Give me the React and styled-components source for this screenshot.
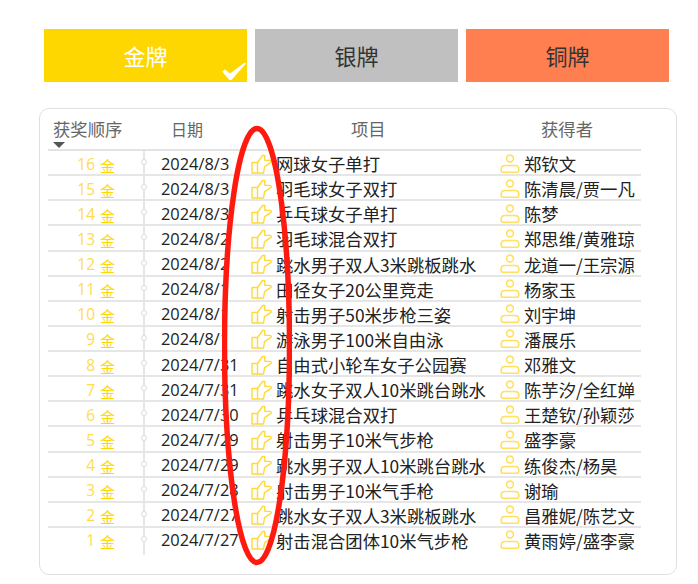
import React, { useState } from 'react'
import styled, { createGlobalStyle } from 'styled-components'

const GlobalStyle = createGlobalStyle`
  html, body { margin: 0; padding: 0; background: #fff; }
  body { font-family: "Open Sans", "Noto Sans CJK SC", sans-serif; }
`

const Page = styled.div`
  position: relative;
  width: 698px;
  height: 584px;
  box-sizing: border-box;
  padding: 29px 0 0 39px;
  overflow: hidden;
`
const Tabs = styled.div`
  display: flex;
  gap: 8px;
  margin-left: 5px;
`
const Tab = styled.button`
  position: relative;
  width: 203px;
  height: 53px;
  padding: 0;
  border: none;
  background: ${p => p.$bg};
  color: ${p => (p.$active ? '#fff' : '#333')};
  font-family: "Noto Sans CJK SC", sans-serif;
  font-size: 22px;
  line-height: 51px;
`
const Check = styled.svg`
  position: absolute;
  right: 1px;
  bottom: 2px;
`
const Card = styled.div`
  box-sizing: border-box;
  width: 638px;
  height: 467px;
  margin-top: 26px;
  padding: 0 0 0 8px;
  border: 1px solid #e0e0e0;
  border-radius: 10px;
`
const HeadRow = styled.div`
  position: relative;
  display: grid;
  grid-template-columns: 118px 180px 190px 1fr;
  width: 593px;
  height: 42px;
  box-sizing: border-box;
  padding-left: 5px;
  border-bottom: 2px solid #e3e3e3;
  color: #666;
  font-family: "Noto Sans CJK SC", sans-serif;
  font-size: 17.33px;
  line-height: 40px;
`
const DateHead = styled.div`
  font-size: 16px;
`
const SortArrow = styled.i`
  position: absolute;
  left: 5px;
  bottom: 1px;
  width: 0;
  height: 0;
  border-left: 6px solid transparent;
  border-right: 6px solid transparent;
  border-top: 6px solid #555;
`
const Row = styled.div`
  display: grid;
  grid-template-columns: 95px 18px 89px 26px 224px 24px 117px;
  align-items: center;
  width: 593px;
  height: 25.13px;
  box-sizing: border-box;
  border-bottom: ${p => (p.$last ? 'none' : '2px solid #e6e6e6')};
  color: #222;
  font-family: "Noto Sans CJK SC", sans-serif;
  font-size: 17.33px;
  white-space: nowrap;
`
const Rank = styled.div`
  display: flex;
  justify-content: flex-end;
  align-items: baseline;
  gap: 5px;
  padding-right: 28px;
  color: #ffdb4d;
  font-family: "Open Sans", sans-serif;
  font-size: 15.5px;
  line-height: 22px;
`
const Medal = styled.span`
  width: 0;
  margin-right: 15px;
  color: #ffd700;
  font-family: "Noto Sans CJK SC", sans-serif;
  font-size: 15px;
  position: relative;
  top: 2px;
`
const Timeline = styled.div`
  position: relative;
  align-self: stretch;
  margin-bottom: -2px;
  &::before {
    content: '';
    position: absolute;
    left: 0;
    top: 0;
    bottom: 0;
    width: 2px;
    background: #e6e6e6;
  }
  &::after {
    content: '';
    position: absolute;
    left: -2.500px;
    top: 8px;
    width: 4px;
    height: 4px;
    background: #fff;
    border: 1.500px solid #dcdcdc;
    border-radius: 50%;
  }
`
const DateText = styled.div`
  font-family: "Open Sans", sans-serif;
  font-size: 16.4px;
  line-height: 22px;
  color: #222;
`
const IconCell = styled.div`
  display: flex;
  align-items: center;
`
const Hoop = styled.svg`
  position: absolute;
  left: 222px;
  top: 125px;
  pointer-events: none;
`

const rows = [
  [16, '2024/8/3', '网球女子单打', '郑钦文'],
  [15, '2024/8/3', '羽毛球女子双打', '陈清晨/贾一凡'],
  [14, '2024/8/3', '乒乓球女子单打', '陈梦'],
  [13, '2024/8/2', '羽毛球混合双打', '郑思维/黄雅琼'],
  [12, '2024/8/2', '跳水男子双人3米跳板跳水', '龙道一/王宗源'],
  [11, '2024/8/1', '田径女子20公里竞走', '杨家玉'],
  [10, '2024/8/1', '射击男子50米步枪三姿', '刘宇坤'],
  [9, '2024/8/1', '游泳男子100米自由泳', '潘展乐'],
  [8, '2024/7/31', '自由式小轮车女子公园赛', '邓雅文'],
  [7, '2024/7/31', '跳水女子双人10米跳台跳水', '陈芋汐/全红婵'],
  [6, '2024/7/30', '乒乓球混合双打', '王楚钦/孙颖莎'],
  [5, '2024/7/29', '射击男子10米气步枪', '盛李豪'],
  [4, '2024/7/29', '跳水男子双人10米跳台跳水', '练俊杰/杨昊'],
  [3, '2024/7/28', '射击男子10米气手枪', '谢瑜'],
  [2, '2024/7/27', '跳水女子双人3米跳板跳水', '昌雅妮/陈艺文'],
  [1, '2024/7/27', '射击混合团体10米气步枪', '黄雨婷/盛李豪'],
]

const tabs = [
  { name: '金牌', bg: '#ffd700' },
  { name: '银牌', bg: '#c0c0c0' },
  { name: '铜牌', bg: '#ff7f50' },
]

const HandIcon = () => (
  <svg width="22" height="20" viewBox="0 0 22 20" fill="none" stroke="#ffd93b" strokeWidth="1.400" strokeLinejoin="round">
    <path d="M2 8.500h5.500v10.500H2z" />
    <path d="M7.500 8.500 12.500 1.500h2.300v4.700l5.200.2c1.300.1 1.700 1.600.6 2.200l-6 4-1.100 6.400H7.500" />
  </svg>
)

const PersonIcon = () => (
  <svg width="20" height="20" viewBox="0 0 20 20" fill="none" stroke="#ffe061" strokeWidth="1.600">
    <circle cx="10" cy="4.500" r="3.400" />
    <path d="M5 11.500h10c2.400 0 3.800 1.500 3.800 3.600v1.100c0 1.300-.7 2-2 2H3.200c-1.300 0-2-.7-2-2v-1.100c0-2.100 1.400-3.600 3.800-3.600z" />
  </svg>
)

export default function App() {
  const [active, setActive] = useState('金牌')
  return (
    <Page>
      <GlobalStyle />
      <Tabs>
        {tabs.map(t => (
          <Tab key={t.name} $bg={t.bg} $active={active === t.name} onClick={() => setActive(t.name)}>
            {t.name}
            {active === t.name && (
              <Check width="24" height="18" viewBox="0 0 24 18" fill="#fff">
                <path d="M0 9.500 3 7.500 8 11.500 23 .5 24 1.500 9.500 18H7.500z" />
              </Check>
            )}
          </Tab>
        ))}
      </Tabs>
      <Card>
        <HeadRow>
          <div>获奖顺序</div>
          <DateHead>日期</DateHead>
          <div>项目</div>
          <div>获得者</div>
          <SortArrow />
        </HeadRow>
        {rows.map((r, i) => (
          <Row key={r[0]} $last={i === rows.length - 1}>
            <Rank>
              {r[0]}
              <Medal>金</Medal>
            </Rank>
            <Timeline />
            <DateText>{r[1]}</DateText>
            <IconCell><HandIcon /></IconCell>
            <div>{r[2]}</div>
            <IconCell><PersonIcon /></IconCell>
            <div>{r[3]}</div>
          </Row>
        ))}
      </Card>
      <Hoop width="70" height="444" viewBox="0 0 70 444" fill="none">
        <ellipse cx="35" cy="220.500" rx="32.500" ry="217" stroke="#ff1a0f" strokeWidth="5.500" />
      </Hoop>
    </Page>
  )
}
